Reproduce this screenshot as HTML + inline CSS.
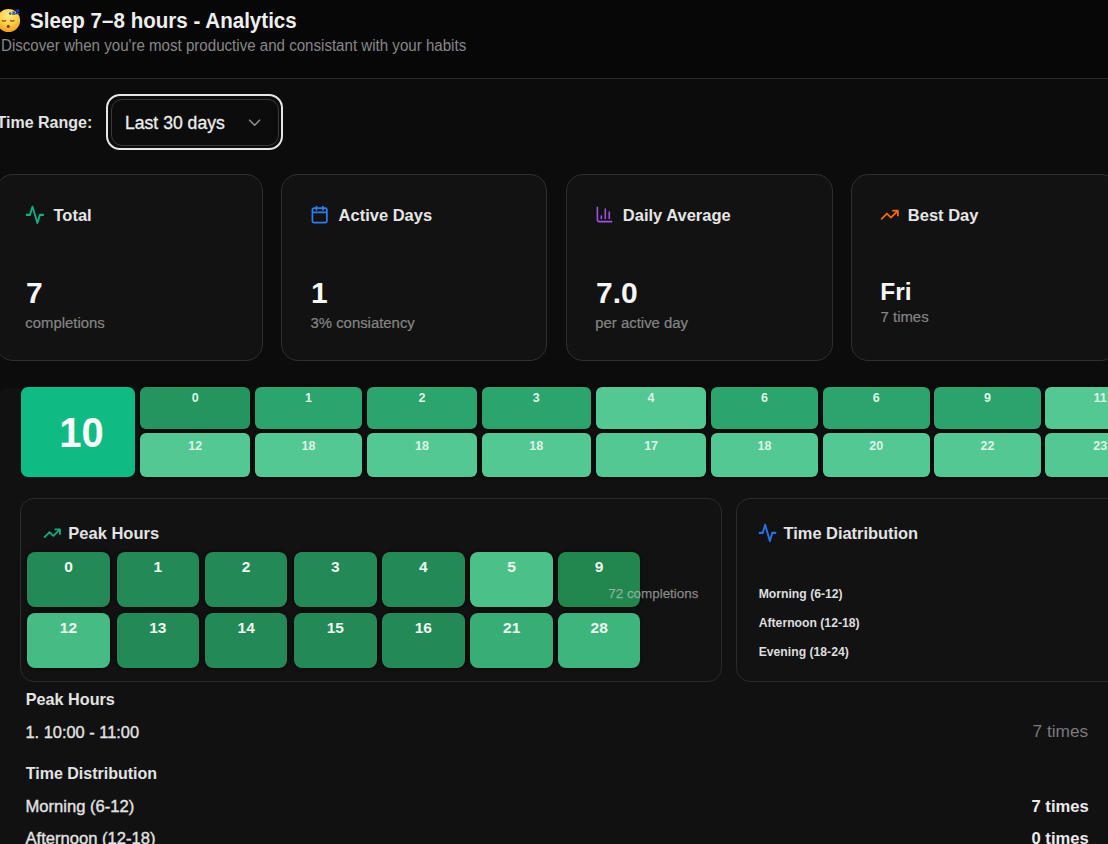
<!DOCTYPE html>
<html><head><meta charset="utf-8">
<style>
*{box-sizing:border-box;margin:0;padding:0}
html,body{width:1108px;height:844px;overflow:hidden;background:#0c0c0c;font-family:"Liberation Sans",sans-serif;color:#f2f2f2}
.abs{position:absolute}
.t{position:absolute;white-space:nowrap;line-height:1}
.card{position:absolute;top:174.4px;width:266.4px;height:186.3px;background:#121212;border:1.2px solid #2f2f2f;border-radius:17px}
.hc{position:absolute;border-radius:6px;box-shadow:0 0 3px 1px rgba(0,0,0,0.55);text-align:center;font-size:12.5px;font-weight:bold;color:#dff2e6;line-height:12.5px}
.pc{position:absolute;width:82.5px;height:55px;border-radius:8px;box-shadow:0 0 3px 1px rgba(0,0,0,0.5);text-align:center;font-size:15.5px;font-weight:bold;color:#eef8f1;line-height:15.5px}
.panel{position:absolute;top:498.2px;height:184.2px;background:#121212;border:1.3px solid #2b2b2b;border-radius:14px}
</style></head><body>
<div class="abs" style="left:0;top:0;width:1108px;height:78px;background:#070707"></div>
<div class="abs" style="left:0;top:77.6px;width:1108px;height:1.4px;background:#2b2b2b"></div>
<svg class="abs" style="left:-4px;top:7px" width="28" height="28" viewBox="0 0 28 28">
<defs><radialGradient id="eg" cx="50%" cy="28%" r="78%"><stop offset="0" stop-color="#ffe98a"/><stop offset="0.5" stop-color="#fccf45"/><stop offset="1" stop-color="#ee9420"/></radialGradient></defs>
<circle cx="12.5" cy="13.5" r="11.6" fill="url(#eg)"/>
<path d="M6.2 13.6q1.7 0.9 3.4 0M14.6 13.6q1.7 0.9 3.4 0" stroke="#9b5a1e" stroke-width="1.3" fill="none" stroke-linecap="round"/>
<ellipse cx="12.3" cy="19.4" rx="1.5" ry="1.7" fill="#86391c"/>
<circle cx="14.2" cy="6.6" r="1.3" fill="#3d5ea8"/>
<path d="M16.6 5h2l-2 2.2h2.2" stroke="#2b4fae" stroke-width="1.2" fill="none" stroke-linejoin="round" stroke-linecap="round"/>
<path d="M20 3.2h3l-3 3.2h3.2" stroke="#1f3f9e" stroke-width="1.5" fill="none" stroke-linejoin="round" stroke-linecap="round"/>
</svg>
<div class="t" style="left:30.2px;top:9.58px;font-size:22px;font-weight:bold;color:#eeeeee;transform:scaleX(0.935);transform-origin:0 0;">Sleep 7–8 hours - Analytics</div>
<div class="t" style="left:1px;top:37.99px;font-size:15.6px;font-weight:normal;color:#878787;transform:scaleX(0.968);transform-origin:0 0;">Discover when you&#39;re most productive and consistant with your habits</div>
<div class="t" style="left:-3.5px;top:115.46px;font-size:16px;font-weight:bold;color:#e3e3e3;">Time Range:</div>
<div class="abs" style="left:106.3px;top:94.3px;width:177.2px;height:56.1px;border:2.6px solid #e6e6e6;border-radius:14px"></div>
<div class="abs" style="left:111.3px;top:99.3px;width:167.8px;height:46.7px;border:1.2px solid #383838;border-radius:11px;background:#0c0c0c"></div>
<div class="t" style="left:125px;top:114.70px;font-size:17.6px;font-weight:normal;color:#eeeeee;-webkit-text-stroke:0.3px #eeeeee;">Last 30 days</div>
<svg class="abs" style="left:0;top:0" width="300" height="160"><path d="M249.6 120.2l5 5 5-5" stroke="#8e8e8e" stroke-width="1.6" fill="none" stroke-linecap="round" stroke-linejoin="round"/></svg>
<div class="card" style="left:-3.8px"></div>
<div class="card" style="left:281.1px"></div>
<div class="card" style="left:566.3px"></div>
<div class="card" style="left:851.3px"></div>
<svg class="abs" style="left:25.1px;top:203.7px" width="19.9" height="21.7" viewBox="0 0 24 24" preserveAspectRatio="none"><path d="M22 12h-4l-3 9L9 3l-3 9H2" stroke="#10b07f" stroke-width="2.3" fill="none" stroke-linecap="round" stroke-linejoin="round"/></svg>
<svg class="abs" style="left:310.2px;top:205px" width="19.3" height="19.3" viewBox="0 0 24 24" preserveAspectRatio="none"><path d="M5 4h14a2 2 0 0 1 2 2v14a2 2 0 0 1-2 2H5a2 2 0 0 1-2-2V6a2 2 0 0 1 2-2zM16 2v4M8 2v4M3 9.2h18" stroke="#2d7ff0" stroke-width="2.1" fill="none" stroke-linecap="round" stroke-linejoin="round"/></svg>
<svg class="abs" style="left:595.3px;top:204.9px" width="19" height="19" viewBox="0 0 24 24" preserveAspectRatio="none"><path d="M3 3v16a2 2 0 0 0 2 2h16M18 17V9M13 17V5M8 17v-3" stroke="#a24ee8" stroke-width="2" fill="none" stroke-linecap="round" stroke-linejoin="round"/></svg>
<svg class="abs" style="left:880px;top:204.9px" width="19.5" height="19.5" viewBox="0 0 24 24" preserveAspectRatio="none"><path d="M22 7l-8.5 8.5-5-5L2 17M16 7h6v6" stroke="#f26b0f" stroke-width="2.2" fill="none" stroke-linecap="round" stroke-linejoin="round"/></svg>
<div class="t" style="left:53.5px;top:206.73px;font-size:16.5px;font-weight:bold;color:#e6e6e6;">Total</div>
<div class="t" style="left:338.6px;top:206.73px;font-size:16.5px;font-weight:bold;color:#e6e6e6;">Active Days</div>
<div class="t" style="left:622.8px;top:206.73px;font-size:16.5px;font-weight:bold;color:#e6e6e6;">Daily Average</div>
<div class="t" style="left:907.8px;top:206.73px;font-size:16.5px;font-weight:bold;color:#e6e6e6;">Best Day</div>
<div class="t" style="left:26px;top:278.31px;font-size:30px;font-weight:bold;color:#f6f6f6;">7</div>
<div class="t" style="left:311px;top:278.31px;font-size:30px;font-weight:bold;color:#f6f6f6;">1</div>
<div class="t" style="left:596px;top:278.31px;font-size:30px;font-weight:bold;color:#f6f6f6;">7.0</div>
<div class="t" style="left:880.3px;top:279.56px;font-size:24.5px;font-weight:bold;color:#f6f6f6;">Fri</div>
<div class="t" style="left:25.3px;top:315.59px;font-size:14.9px;font-weight:normal;color:#858585;-webkit-text-stroke:0.2px #858585;">completions</div>
<div class="t" style="left:310.5px;top:315.59px;font-size:14.9px;font-weight:normal;color:#858585;-webkit-text-stroke:0.2px #858585;">3% consiatency</div>
<div class="t" style="left:595.3px;top:315.59px;font-size:14.9px;font-weight:normal;color:#858585;-webkit-text-stroke:0.2px #858585;">per active day</div>
<div class="t" style="left:880.6px;top:309.59px;font-size:14.9px;font-weight:normal;color:#858585;-webkit-text-stroke:0.2px #858585;">7 times</div>
<div class="abs" style="left:-4px;top:388.2px;width:1130px;height:470px;background:#111111;border-radius:12px"></div>
<div class="abs" style="left:21.2px;top:386.5px;width:113.6px;height:90px;background:#0fba83;border-radius:7px"></div>
<div class="t" style="left:21.2px;top:410.8px;width:113.6px;padding-left:7px;text-align:center;font-size:40px;transform:scaleY(1.08);transform-origin:50% 0;font-weight:bold;color:#fbfffd;line-height:38px">10</div>
<div class="hc" style="left:140px;top:387px;width:110.3px;height:42px;background:#25955f;padding-top:5.3px">0</div>
<div class="hc" style="left:140px;top:433px;width:110.3px;height:43.5px;background:#53c892;padding-top:6.6px">12</div>
<div class="hc" style="left:254.5px;top:387px;width:107.8px;height:42px;background:#2ca46d;padding-top:5.3px">1</div>
<div class="hc" style="left:254.5px;top:433px;width:107.8px;height:43.5px;background:#53c892;padding-top:6.6px">18</div>
<div class="hc" style="left:367px;top:387px;width:109.9px;height:42px;background:#2ca46d;padding-top:5.3px">2</div>
<div class="hc" style="left:367px;top:433px;width:109.9px;height:43.5px;background:#53c892;padding-top:6.6px">18</div>
<div class="hc" style="left:481.6px;top:387px;width:109.2px;height:42px;background:#2ca46d;padding-top:5.3px">3</div>
<div class="hc" style="left:481.6px;top:433px;width:109.2px;height:43.5px;background:#53c892;padding-top:6.6px">18</div>
<div class="hc" style="left:596.2px;top:387px;width:109.8px;height:42px;background:#53c892;padding-top:5.3px">4</div>
<div class="hc" style="left:596.2px;top:433px;width:109.8px;height:43.5px;background:#53c892;padding-top:6.6px">17</div>
<div class="hc" style="left:710.7px;top:387px;width:107.6px;height:42px;background:#2ca46d;padding-top:5.3px">6</div>
<div class="hc" style="left:710.7px;top:433px;width:107.6px;height:43.5px;background:#53c892;padding-top:6.6px">18</div>
<div class="hc" style="left:823px;top:387px;width:106.6px;height:42px;background:#2da36d;padding-top:5.3px">6</div>
<div class="hc" style="left:823px;top:433px;width:106.6px;height:43.5px;background:#53c892;padding-top:6.6px">20</div>
<div class="hc" style="left:934.3px;top:387px;width:106.3px;height:42px;background:#2ca36d;padding-top:5.3px">9</div>
<div class="hc" style="left:934.3px;top:433px;width:106.3px;height:43.5px;background:#53c892;padding-top:6.6px">22</div>
<div class="hc" style="left:1045.3px;top:387px;width:109.7px;height:42px;background:#53c892;padding-top:5.3px">11</div>
<div class="hc" style="left:1045.3px;top:433px;width:109.7px;height:43.5px;background:#53c892;padding-top:6.6px">23</div>
<div class="panel" style="left:20.2px;width:701.6px"></div>
<div class="panel" style="left:736.2px;width:420px"></div>
<div class="pc" style="left:27.2px;top:551.9px;background:#238a57;padding-top:7px">0</div>
<div class="pc" style="left:27.2px;top:612.6px;background:#46bb83;padding-top:7.5px">12</div>
<div class="pc" style="left:116.6px;top:551.9px;background:#238a57;padding-top:7px">1</div>
<div class="pc" style="left:116.6px;top:612.6px;background:#238a57;padding-top:7.5px">13</div>
<div class="pc" style="left:204.9px;top:551.9px;background:#238a57;padding-top:7px">2</div>
<div class="pc" style="left:204.9px;top:612.6px;background:#238a57;padding-top:7.5px">14</div>
<div class="pc" style="left:294.1px;top:551.9px;background:#238a57;padding-top:7px">3</div>
<div class="pc" style="left:294.1px;top:612.6px;background:#238a57;padding-top:7.5px">15</div>
<div class="pc" style="left:382px;top:551.9px;background:#238a57;padding-top:7px">4</div>
<div class="pc" style="left:382px;top:612.6px;background:#238a57;padding-top:7.5px">16</div>
<div class="pc" style="left:470.4px;top:551.9px;background:#4cc089;padding-top:7px">5</div>
<div class="pc" style="left:470.4px;top:612.6px;background:#38ad76;padding-top:7.5px">21</div>
<div class="pc" style="left:557.9px;top:551.9px;background:#22864f;padding-top:7px">9</div>
<div class="pc" style="left:557.9px;top:612.6px;background:#3db57c;padding-top:7.5px">28</div>
<svg class="abs" style="left:42.8px;top:524px" width="18.5" height="18.5" viewBox="0 0 24 24" preserveAspectRatio="none"><path d="M22 7l-8.5 8.5-5-5L2 17M16 7h6v6" stroke="#10ab7c" stroke-width="2.4" fill="none" stroke-linecap="round" stroke-linejoin="round"/></svg>
<div class="t" style="left:68.3px;top:525.13px;font-size:16.5px;font-weight:bold;color:#e3e3e3;">Peak Hours</div>
<div class="t" style="left:608.3px;top:586.66px;font-size:13.4px;font-weight:normal;color:rgba(200,200,200,0.6);-webkit-text-stroke:0.25px rgba(200,200,200,0.6);">72 completions</div>
<svg class="abs" style="left:758px;top:522.3px" width="19" height="21.8" viewBox="0 0 24 24" preserveAspectRatio="none"><path d="M22 12h-4l-3 9L9 3l-3 9H2" stroke="#2474e6" stroke-width="2.4" fill="none" stroke-linecap="round" stroke-linejoin="round"/></svg>
<div class="t" style="left:783.6px;top:524.92px;font-size:16.4px;font-weight:bold;color:#e3e3e3;">Time Diatribution</div>
<div class="t" style="left:758.7px;top:587.57px;font-size:12.2px;font-weight:bold;color:#dedede;">Morning (6-12)</div>
<div class="t" style="left:758.7px;top:616.97px;font-size:12.2px;font-weight:bold;color:#dedede;">Afternoon (12-18)</div>
<div class="t" style="left:758.7px;top:645.67px;font-size:12.2px;font-weight:bold;color:#dedede;">Evening (18-24)</div>
<div class="t" style="left:25.8px;top:690.99px;font-size:16.2px;font-weight:bold;color:#e3e3e3;">Peak Hours</div>
<div class="t" style="left:25.5px;top:723.72px;font-size:16.4px;font-weight:normal;color:#e3e3e3;-webkit-text-stroke:0.35px #e3e3e3;">1. 10:00 - 11:00</div>
<div class="t" style="right:19.8px;top:722.56px;font-size:17.3px;font-weight:normal;color:#7a7a7a">7 times</div>
<div class="t" style="left:25.8px;top:766.26px;font-size:16px;font-weight:bold;color:#e3e3e3;">Time Distribution</div>
<div class="t" style="left:25.5px;top:798.55px;font-size:16.6px;font-weight:normal;color:#e3e3e3;-webkit-text-stroke:0.35px #e3e3e3;">Morning (6-12)</div>
<div class="t" style="right:19.3px;top:798.55px;font-size:16.6px;font-weight:bold;color:#ebebeb">7 times</div>
<div class="t" style="left:25.5px;top:831.25px;font-size:16.6px;font-weight:normal;color:#e3e3e3;-webkit-text-stroke:0.35px #e3e3e3;">Afternoon (12-18)</div>
<div class="t" style="right:19.3px;top:831.25px;font-size:16.6px;font-weight:bold;color:#ebebeb">0 times</div>
</body></html>
